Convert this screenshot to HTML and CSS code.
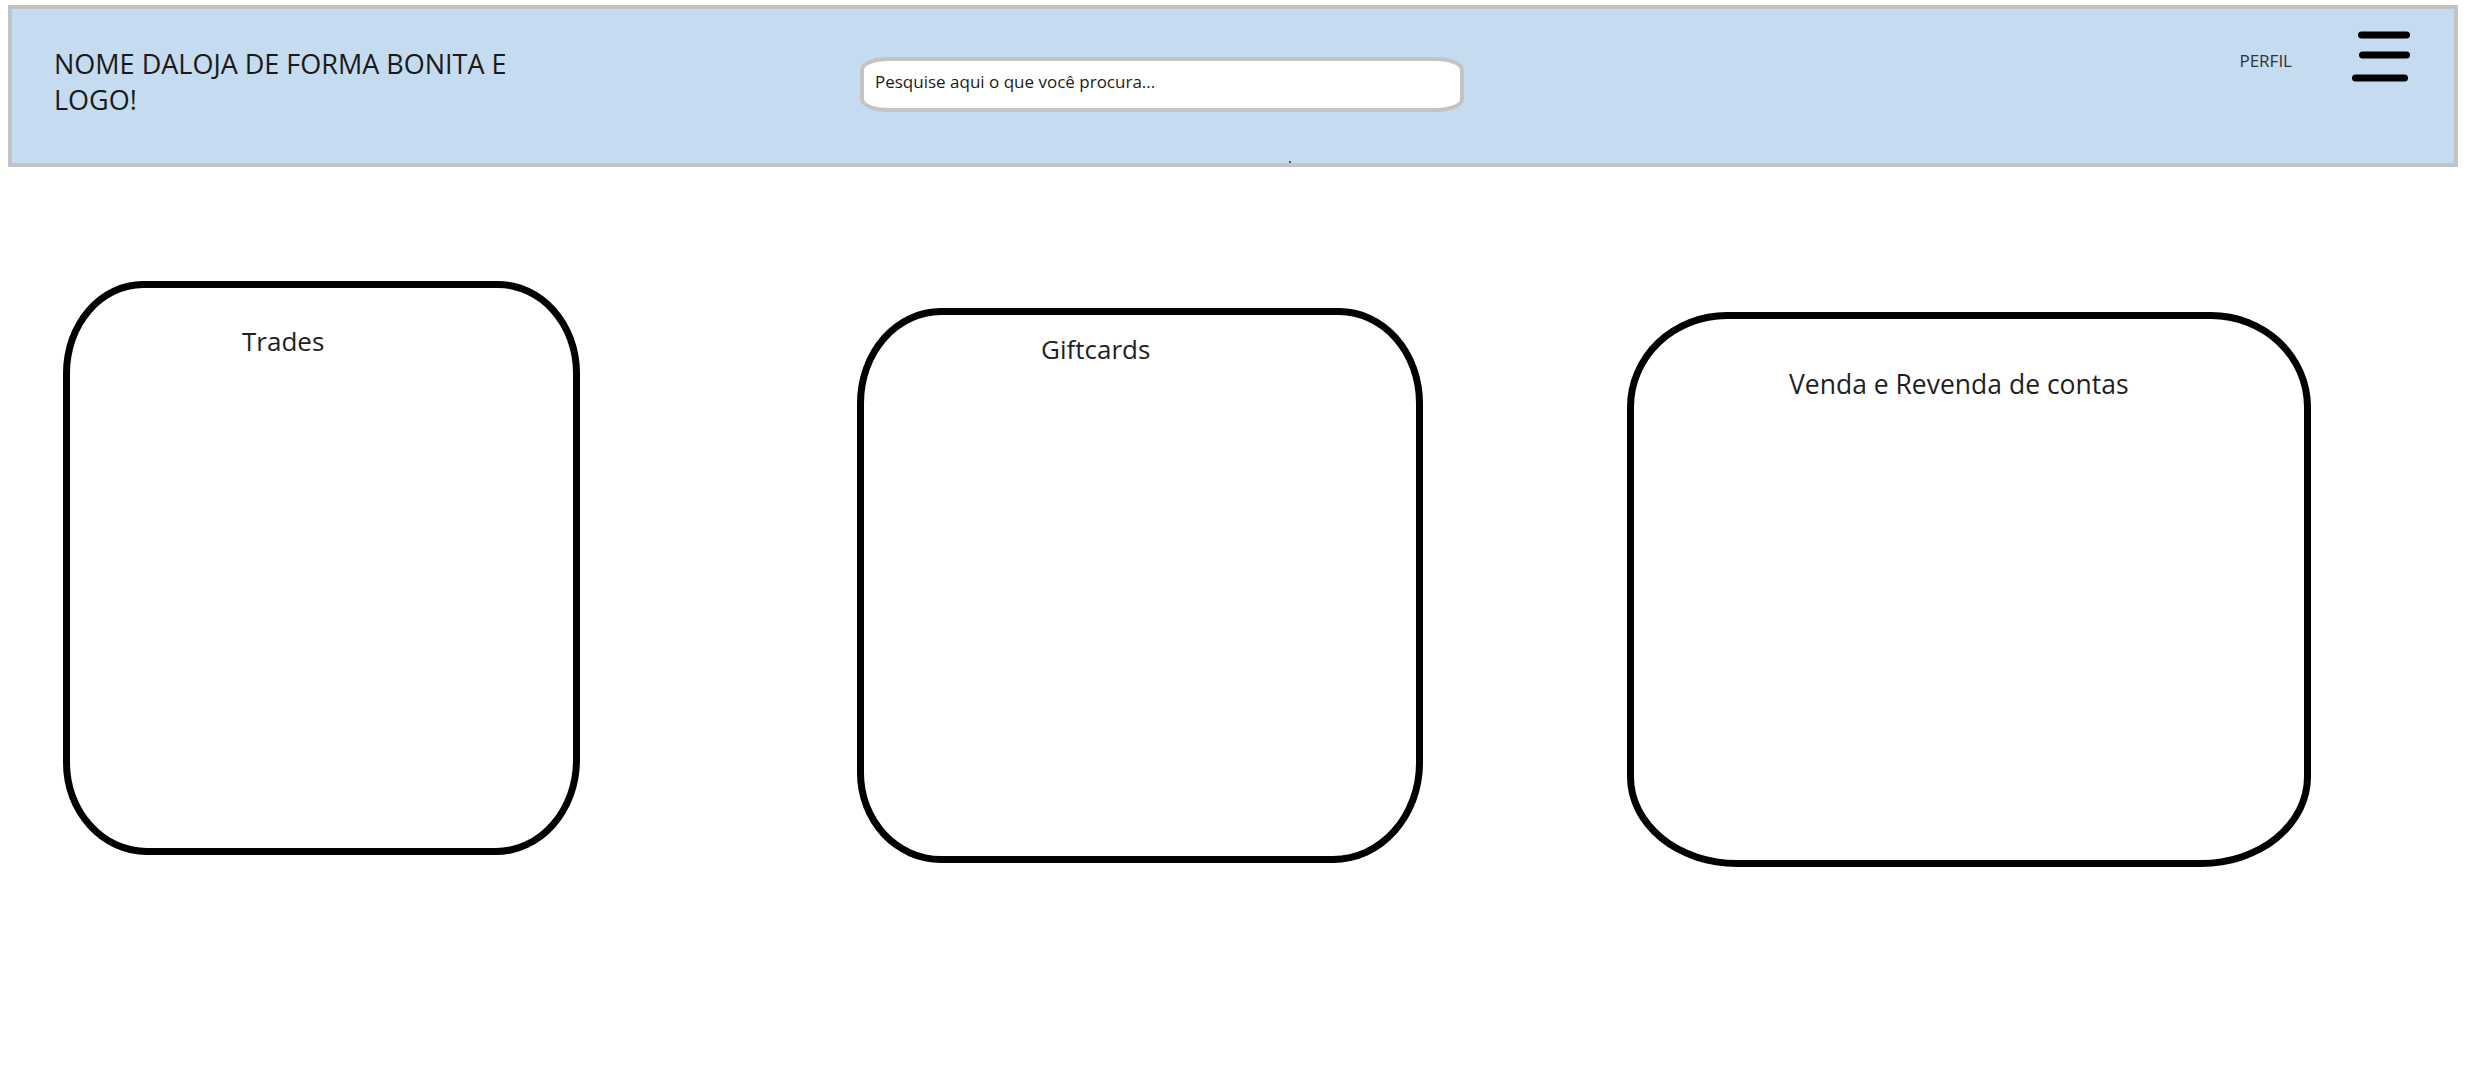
FILE: index.html
```html
<!DOCTYPE html>
<html lang="pt-BR">
<head>
<meta charset="utf-8">
<title>Loja</title>
<link rel="stylesheet" href="styles.css">
</head>
<body>
<header class="topbar">
  <div class="brand">NOME DALOJA DE FORMA BONITA E<br>LOGO!</div>
  <div class="search">Pesquise aqui o que você procura...</div>
  <a class="perfil">PERFIL</a>
  <svg class="burger" width="62" height="54" viewBox="0 0 62 54" aria-label="menu">
    <line x1="11.5" y1="5" x2="56.5" y2="5"/>
    <line x1="12.5" y1="25" x2="56.5" y2="25"/>
    <line x1="5.5" y1="48" x2="54.5" y2="48"/>
  </svg>
</header>
<main class="cards">
  <section class="card card-trades"><h2 class="card-title">Trades</h2></section>
  <section class="card card-gift"><h2 class="card-title">Giftcards</h2></section>
  <section class="card card-contas"><h2 class="card-title">Venda e Revenda de contas</h2></section>
</main>
</body>
</html>
```

FILE: styles.css
```css
html, body {
  margin: 0;
  padding: 0;
  background: #ffffff;
}

body {
  font-family: "Open Sans", "Noto Sans", "DejaVu Sans", sans-serif;
  color: #1f1f1f;
  width: 2469px;
  height: 1092px;
  overflow: hidden;
}

.topbar {
  position: relative;
  box-sizing: border-box;
  margin: 5px 0 0 8px;
  width: 2450px;
  height: 162px;
  border: 4px solid #c3c3c3;
  background: #c5dbef;
  display: flex;
  align-items: flex-start;
  padding: 0 42px 0 42px;
}

.topbar::after {
  content: "";
  position: absolute;
  left: 1277px;
  top: 152px;
  width: 2px;
  height: 2px;
  background: #555;
}

.brand {
  width: 806px;
  flex: none;
  margin-top: 37px;
  font-size: 27px;
  line-height: 36px;
  color: #1a1a1a;
}

.search {
  box-sizing: border-box;
  flex: none;
  width: 604px;
  height: 55px;
  margin-top: 48px;
  border: 4px solid #c3c3c3;
  border-radius: 28px / 13px;
  background: #ffffff;
  font-size: 17px;
  line-height: 22px;
  padding: 10px 0 0 11px;
  color: #1a1a1a;
}

.perfil {
  margin-left: auto;
  margin-top: 42px;
  font-size: 17px;
  line-height: 20px;
  color: #333333;
}

.burger {
  flex: none;
  margin-left: 58px;
  margin-top: 21px;
  stroke: #000;
  stroke-width: 7;
  stroke-linecap: round;
}

.cards {
  display: flex;
  align-items: flex-start;
  padding: 114px 0 0 63px;
}

.card {
  box-sizing: border-box;
  flex: none;
  border: 7px solid #000;
  background: #fff;
}

.card-title {
  margin: 0;
  font-weight: 400;
  font-size: 26px;
  line-height: 30px;
  color: #1f1f1f;
}

.card-trades {
  width: 517px;
  height: 574px;
  border-radius: 80px 82px 84px 84px / 92px 92px 95px 92px;
  padding: 38px 0 0 172px;
}

.card-gift {
  width: 566px;
  height: 555px;
  margin-left: 277px;
  margin-top: 27px;
  border-radius: 84px 84px 90px 84px / 95px 95px 100px 90px;
  padding: 19px 0 0 177px;
}

.card-contas {
  width: 684px;
  height: 555px;
  margin-left: 204px;
  margin-top: 31px;
  border-radius: 100px 100px 110px 110px / 95px 95px 90px 90px;
  padding: 50px 0 0 155px;
}

.card-contas .card-title {
  font-size: 26.5px;
}
```
